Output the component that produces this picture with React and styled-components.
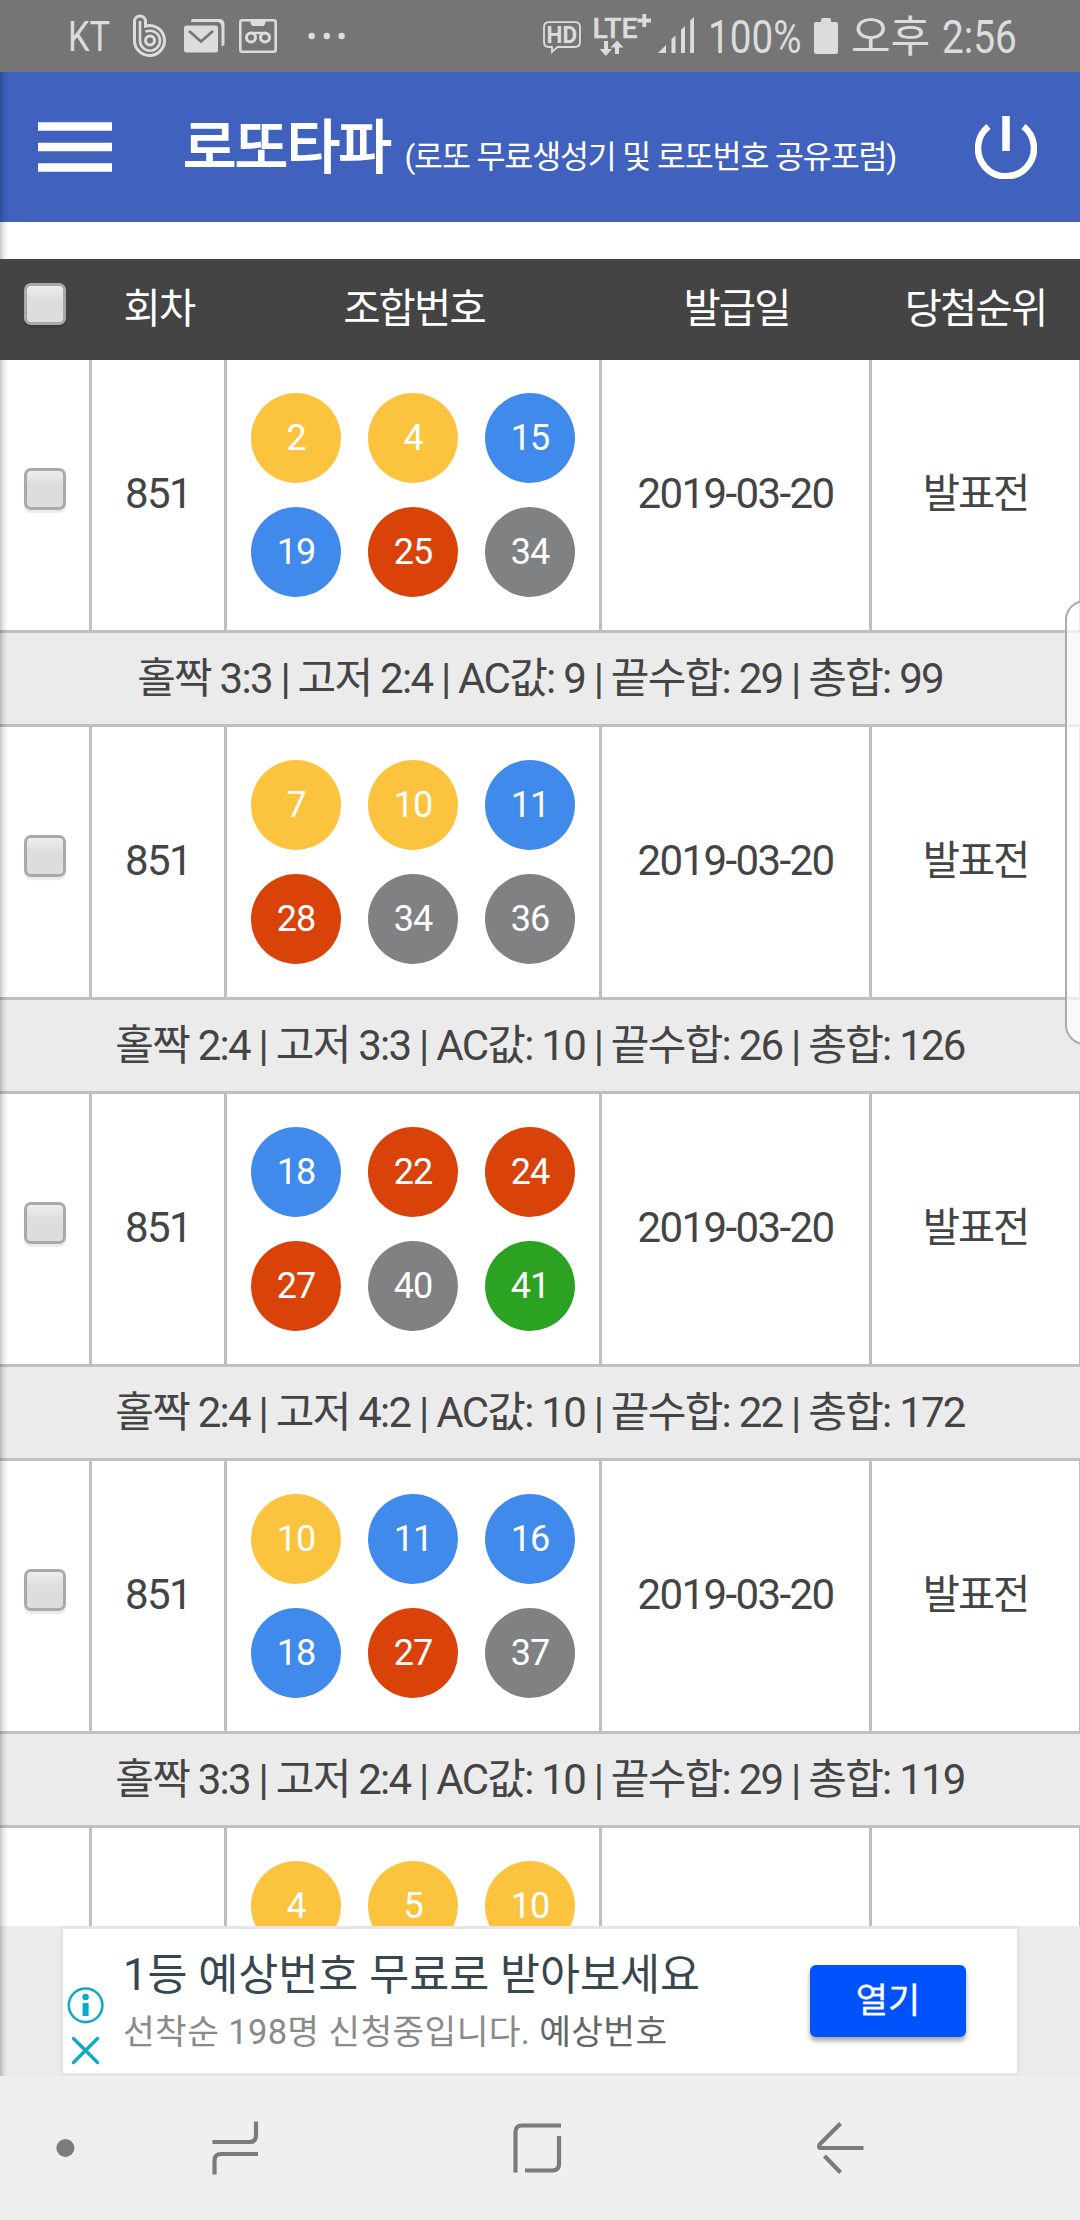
import React from 'react'
import styled, { createGlobalStyle } from 'styled-components'

const ballColor = {
  yellow: '#fcc33e',
  blue: '#3f8aeb',
  red: '#d9430a',
  gray: '#808183',
  green: '#2ba222'
}

const getColor = number => {
  if (number <= 10) return ballColor.yellow
  if (number <= 20) return ballColor.blue
  if (number <= 30) return ballColor.red
  if (number <= 40) return ballColor.gray
  return ballColor.green
}

const draws = [
  { id: 1, numbers: [2, 4, 15, 19, 25, 34], info: '홀짝 3:3 | 고저 2:4 | AC값: 9 | 끝수합: 29 | 총합: 99' },
  { id: 2, numbers: [7, 10, 11, 28, 34, 36], info: '홀짝 2:4 | 고저 3:3 | AC값: 10 | 끝수합: 26 | 총합: 126' },
  { id: 3, numbers: [18, 22, 24, 27, 40, 41], info: '홀짝 2:4 | 고저 4:2 | AC값: 10 | 끝수합: 22 | 총합: 172' },
  { id: 4, numbers: [10, 11, 16, 18, 27, 37], info: '홀짝 3:3 | 고저 2:4 | AC값: 10 | 끝수합: 29 | 총합: 119' },
  { id: 5, numbers: [4, 5, 10] }
]

export default function App () {
  return (
    <>
      <GlobalStyle />
      <Phone>
        <StatusBar />
        <Page>
          <LeftShade />
          <Header>
            <MenuIcon />
            <Brand>
              <h1>로또타파</h1>
              <p>(로또 무료생성기 및 로또번호 공유포럼)</p>
            </Brand>
            <PowerIcon />
          </Header>
          <TableHead>
            <CheckCell><CheckBox /></CheckCell>
            <HeadCell>회차</HeadCell>
            <HeadCell>조합번호</HeadCell>
            <HeadCell>발급일</HeadCell>
            <HeadCell>당첨순위</HeadCell>
          </TableHead>
          <TableBody>
            {draws.map(draw => <Draw key={draw.id} {...draw} />)}
          </TableBody>
          <Ad />
        </Page>
        <NavBar />
        <EdgeHandle />
      </Phone>
    </>
  )
}

function Draw ({ numbers, info }) {
  return (
    <>
      <Row>
        <CheckCell>{info && <CheckBox $light />}</CheckCell>
        <Cell>{info && '851'}</Cell>
        <Balls>
          {numbers.map(number => <Ball key={number} color={getColor(number)}>{number}</Ball>)}
        </Balls>
        <Cell>{info && '2019-03-20'}</Cell>
        <Cell $hangul>{info && '발표전'}</Cell>
      </Row>
      {info && <Info>{info}</Info>}
    </>
  )
}

function StatusBar () {
  return (
    <Status>
      <StatusText $width={49} $size={42} $scale={0.82}>KT</StatusText>
      <StatusIcons width='240' height='72' viewBox='117 0 240 72'>
        <g fill='none' stroke='#dcdcdc'>
          <path d='M134.500 40V21.500a5.500 5.500 0 0 1 11 0V26a15 15 0 1 1-11 14' strokeWidth='3' />
          <path d='M140 21v19.500a10 10 0 1 0 10-9.800q-2 0-4.500 1' strokeWidth='2.600' />
          <circle cx='150' cy='40.500' r='4.500' strokeWidth='3' />
        </g>
        <path d='M191 22v-1q0-2 2-2h26q5.500 0 5.500 5.500V44q0 2-2 2h-1V27q0-5-5-5z' fill='#dcdcdc' />
        <rect x='184' y='25.500' width='34' height='27' rx='2.500' fill='#dcdcdc' />
        <path d='M189 31l12 10.500L213 31' fill='none' stroke='#757575' strokeWidth='2.800' />
        <rect x='240.300' y='20.300' width='35.400' height='31.400' rx='2' fill='none' stroke='#dcdcdc' strokeWidth='2.600' />
        <path d='M249 19h18l-3 7h-12z' fill='#dcdcdc' />
        <g fill='none' stroke='#dcdcdc' strokeWidth='3'>
          <circle cx='251' cy='37.500' r='4.500' />
          <circle cx='265' cy='37.500' r='4.500' />
          <path d='M251 33h14' strokeWidth='2.400' />
        </g>
        <g fill='#dcdcdc'>
          <circle cx='311.700' cy='36' r='3.200' />
          <circle cx='326.800' cy='36' r='3.200' />
          <circle cx='341.600' cy='36' r='3.200' />
        </g>
      </StatusIcons>
      <Spacer />
      <StatusIcons width='168' height='72' viewBox='540 0 168 72'>
        <path d='M549 22.200h26q5 0 5 5V42q0 5-5 5H557.500l-5.500 5V47H549q-5 0-5-5V27.200q0-5 5-5z' fill='none' stroke='#dcdcdc' strokeWidth='1.800' />
        <text x='546.500' y='43' fontSize='23.500' fontWeight='700' fill='#dcdcdc' textLength='30.500' lengthAdjust='spacingAndGlyphs'>HD</text>
        <text x='592.500' y='38' fontSize='27' fontWeight='500' fill='#dcdcdc' textLength='45' lengthAdjust='spacingAndGlyphs' stroke='#dcdcdc' strokeWidth='.4'>LTE</text>
        <path d='M637.500 20.500H651M644.300 14v13' stroke='#dcdcdc' strokeWidth='3.800' />
        <path d='M604 41h4v8h4l-6.200 7-6.200-7h4.400zM615 54h4v-6.500h4.500l-6.500-7-6.500 7h4.500z' fill='#dcdcdc' />
        <path d='M658 53l8-8v8zM671.500 39l4-3.500V53h-4zM681 30l4-4v27h-4zM690.200 20.500l3.800-3.500v36h-3.800z' fill='#dcdcdc' />
      </StatusIcons>
      <StatusText $width={105} $size={46} $scale={0.84}>100%</StatusText>
      <StatusIcons width='38' height='72' viewBox='813 0 38 72'>
        <path d='M821 22v-2q0-2 2-2h6q2 0 2 2v2h5q2 0 2 2v28q0 2-2 2h-20q-2 0-2-2V24q0-2 2-2z' fill='#dcdcdc' />
      </StatusIcons>
      <StatusText $width={91} $size={43}>오후</StatusText>
      <StatusText $width={138} $size={46} $scale={0.845}>2:56</StatusText>
    </Status>
  )
}

function MenuIcon () {
  return (
    <svg width='74' height='54' viewBox='0 0 74 54'>
      <path d='M0 6.500h74M0 27h74M0 47.500h74' stroke='#fff' strokeWidth='8.500' />
    </svg>
  )
}

function PowerIcon () {
  return (
    <svg width='62' height='64' viewBox='0 0 62 64'>
      <path d='M13.500 11.500a28 28 0 1 0 35 0' fill='none' stroke='#fff' strokeWidth='6.500' />
      <path d='M31 1v35' stroke='#fff' strokeWidth='7.500' />
    </svg>
  )
}

function Ad () {
  return (
    <AdBar>
      <AdBox>
        <svg width='40' height='144' viewBox='66 1929 40 144'>
          <g fill='none' stroke='#12aac5' strokeWidth='2.600'>
            <circle cx='85.600' cy='2005.300' r='16.800' />
            <path d='M73.500 2038.500l24 24M97.500 2038.500l-24 24' strokeWidth='3.400' strokeLinecap='round' />
          </g>
          <path d='M82.600 2003h6v13h-6z' fill='#00aecd' />
          <circle cx='85.600' cy='1997' r='3.200' fill='#00aecd' />
        </svg>
        <AdText>
          <h2>1등 예상번호 무료로 받아보세요</h2>
          <p>선착순 198명 신청중입니다. <b>예상번호</b></p>
        </AdText>
        <AdButton>열기</AdButton>
      </AdBox>
    </AdBar>
  )
}

function NavBar () {
  return (
    <Nav>
      <svg width='1080' height='144' viewBox='0 2076 1080 144'>
        <circle cx='65.400' cy='2148' r='9' fill='#7b7b7b' />
        <g fill='none' stroke='#7b7b7b' strokeWidth='4.200'>
          <path d='M212.500 2142h37q6.500 0 6.500-6.500V2121.500' />
          <path d='M258 2154h-37q-6.500 0-6.500 6.500V2174.500' />
          <path d='M515.500 2172.500V2132q0-6.500 6.500-6.500h39' />
          <path d='M559 2136v28q0 6.500-6.500 6.500H525' />
          <path d='M863.500 2148H821.500q-4 0-1.500-4l20.500-20.500' />
          <path d='M824.500 2156l16 16.500' />
        </g>
      </svg>
    </Nav>
  )
}

const GlobalStyle = createGlobalStyle`
* {
  box-sizing: border-box;
}
body {
  margin: 0;
  font-family: Roboto, 'Noto Sans CJK KR', sans-serif;
}
h1, h2, p {
  margin: 0;
  font-weight: 400;
}
svg {
  display: block;
  flex: none;
}
`
const Phone = styled.div`
position: relative;
width: 1080px;
height: 2220px;
overflow: hidden;
display: flex;
flex-direction: column;
background: #fff;
`
const Status = styled.div`
height: 72px;
flex: none;
display: flex;
align-items: center;
padding-left: 68px;
background: #757575;
color: #dcdcdc;
`
const StatusIcons = styled.svg`
font-family: Roboto, sans-serif;
`
const StatusText = styled.span`
width: ${props => props.$width}px;
flex: none;
font-size: ${props => props.$size}px;
line-height: 72px;
padding-top: 1px;
white-space: nowrap;
transform: scaleX(${props => props.$scale || 1});
transform-origin: left center;
`
const Spacer = styled.div`
flex: 1;
`
const Page = styled.main`
position: relative;
height: 2004px;
flex: none;
display: flex;
flex-direction: column;
`
const Header = styled.header`
height: 150px;
flex: none;
display: flex;
align-items: center;
padding: 0 43px 0 38px;
margin-bottom: 37px;
background: #4062be;
color: #fff;
`
const Brand = styled.div`
flex: 1;
display: flex;
align-items: baseline;
padding: 1px 0 0 71px;
white-space: nowrap;
& > h1 {
  font-size: 58px;
  line-height: 80px;
  letter-spacing: -0.026em;
  -webkit-text-stroke: 1.8px #fff;
}
& > p {
  font-size: 31.5px;
  letter-spacing: -0.036em;
  margin-left: 14px;
}
`
const columns = '92px 135px 375px 270px 208px'

const TableHead = styled.div`
position: relative;
z-index: 2;
height: 101px;
flex: none;
display: grid;
grid-template-columns: ${columns};
background: #444;
color: #fff;
`
const HeadCell = styled.div`
display: flex;
align-items: center;
justify-content: center;
padding: 0 1px 8px 0;
font-size: 40.5px;
letter-spacing: -0.046em;
`
const TableBody = styled.div`
height: 1566px;
flex: none;
overflow: hidden;
`
const Row = styled.div`
height: 270px;
display: grid;
grid-template-columns: ${columns};
& > div {
  border-right: 3px solid #bfbfbf;
}
& > div:last-child {
  border-right-width: 1px;
}
`
const Cell = styled.div`
display: flex;
align-items: center;
justify-content: center;
color: #444;
font-size: ${props => props.$hangul ? 40.5 : 42}px;
letter-spacing: ${props => props.$hangul ? '-0.05em' : '-0.038em'};
padding-bottom: ${props => props.$hangul ? 9 : 4}px;
`
const CheckCell = styled.div`
display: flex;
align-items: center;
padding: 0 0 12px 24px;
`
const CheckBox = styled.span`
width: 42px;
height: 42px;
border: 3px solid #a9a9a9;
border-radius: 7px;
background: linear-gradient(#eee, #ddd 40%, #ddd);
box-shadow: 0 3px 1px ${props => props.$light ? '#ebebeb' : '#3c3c3c'};
`
const Balls = styled.div`
display: grid;
grid-template-columns: repeat(3, 90px);
grid-auto-rows: 90px;
gap: 24px 27px;
padding: 33px 24px;
`
const Ball = styled.span`
display: flex;
align-items: center;
justify-content: center;
border-radius: 50%;
background: ${props => props.color};
color: #fff;
font-size: 36px;
letter-spacing: -0.03em;
`
const Info = styled.div`
height: 97px;
display: flex;
align-items: center;
justify-content: center;
border-top: 3px solid #bfbfbf;
border-bottom: 3px solid #bfbfbf;
background: #ebebeb;
color: #444;
font-size: 42px;
letter-spacing: -0.0415em;
padding-bottom: 8px;
white-space: nowrap;
`
const AdBar = styled.div`
height: 150px;
flex: none;
padding: 0 60px;
background: #ebebeb;
`
const AdBox = styled.div`
height: 150px;
display: flex;
align-items: center;
border: 3px solid #e3e5e6;
background: #fff;
padding: 0 51px 0 3px;
`
const AdText = styled.div`
flex: 1;
padding: 0 0 0 17px;
white-space: nowrap;
& > h2 {
  font-size: 43.5px;
  line-height: 61px;
  color: #37474f;
}
& > p {
  font-size: 34.5px;
  line-height: 52px;
  letter-spacing: 0.01em;
  color: #8a8a8a;
}
b {
  font-weight: 400;
  color: #666;
}
`
const AdButton = styled.button`
width: 156px;
height: 72px;
border: none;
border-radius: 6px;
background: #0052fc;
box-shadow: 0 4px 5px rgba(0, 0, 0, 0.35);
color: #fff;
font-family: inherit;
font-size: 35px;
-webkit-text-stroke: 0.3px #fff;
padding: 0 0 7px;
`
const Nav = styled.nav`
height: 144px;
flex: none;
background: #efefef;
`
/* side shadow of the drawer hidden beyond the left edge */
const LeftShade = styled.div`
position: absolute;
z-index: 1;
left: 0;
top: 0;
bottom: 0;
width: 8px;
background: linear-gradient(90deg, rgba(0, 0, 0, 0.22), rgba(0, 0, 0, 0.07) 50%, transparent);
`
const EdgeHandle = styled.div`
position: absolute;
z-index: 3;
left: 1065px;
top: 600px;
width: 40px;
height: 445px;
border: 2px solid #acacac;
border-radius: 20px;
background: rgba(255, 255, 255, 0.7);
`
